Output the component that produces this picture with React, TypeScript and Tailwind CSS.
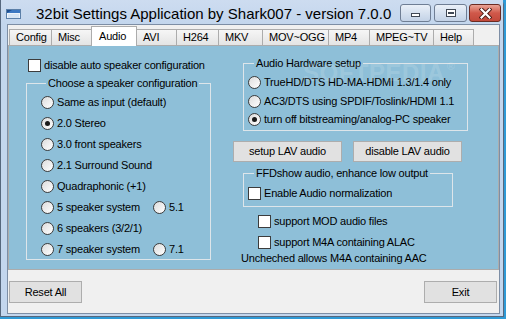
import React from "react";

const ui =
  "font-['Liberation_Sans',Arial,sans-serif] text-[11px] leading-[13px] tracking-[-0.2px] text-black";

type RadioProps = { label: string; checked?: boolean; className?: string };

const Radio = ({ label, checked, className = "" }: RadioProps) => (
  <div className={`flex items-center gap-[3px] h-[13px] ${className}`}>
    <span className="w-[13px] h-[13px] shrink-0 rounded-full border border-[#3c3c3c] bg-linear-to-br from-[#dcdcdc] to-white flex items-center justify-center">
      {checked && <span className="w-[5px] h-[5px] rounded-full bg-[#1a1a1a]" />}
    </span>
    <span className="whitespace-nowrap">{label}</span>
  </div>
);

const Check = ({ label, className = "" }: { label: string; className?: string }) => (
  <div className={`flex items-center gap-[3px] h-[13px] ${className}`}>
    <span className="w-[13px] h-[13px] shrink-0 border border-[#3c3c3c] bg-white" />
    <span className="whitespace-nowrap">{label}</span>
  </div>
);

const Group = ({
  title,
  className = "",
  legend = "ml-[5px]",
  children,
}: {
  title: string;
  className?: string;
  legend?: string;
  children: React.ReactNode;
}) => (
  <fieldset className={`border border-[#dde5ea] ${className}`}>
    <legend className={`px-[2px] leading-[13px] whitespace-nowrap ${legend}`}>{title}</legend>
    {children}
  </fieldset>
);

const Button = ({ label, className = "" }: { label: string; className?: string }) => (
  <div
    className={`flex items-center justify-center border border-[#adadad] bg-[#e1e1e1] whitespace-nowrap ${className}`}
  >
    {label}
  </div>
);

const tabs: { name: string; w: string }[] = [
  { name: "Config", w: "w-[43px]" },
  { name: "Misc", w: "w-[41px]" },
  { name: "Audio", w: "w-[46px]" },
  { name: "AVI", w: "w-[41px]" },
  { name: "H264", w: "w-[43px]" },
  { name: "MKV", w: "w-[45px]" },
  { name: "MOV~OGG", w: "w-[67px]" },
  { name: "MP4", w: "w-[42px]" },
  { name: "MPEG~TV", w: "w-[65px]" },
  { name: "Help", w: "w-[41px]" },
];

const WinIcon = () => (
  <svg width="15" height="10" viewBox="0 0 15 10">
    <rect x="0.5" y="0.5" width="14" height="9" fill="#eef4fb" stroke="#5b7fa8" />
    <rect x="1" y="1" width="13" height="3" fill="#3d78c2" />
    <path d="M1 4 L6 1 L1 1 Z" fill="#1f4f8f" />
    <rect x="2" y="5" width="11" height="4" fill="#d6e4f4" />
  </svg>
);

const CaptionButtons = () => (
  <div className="ml-auto mr-[2px] mt-[4px] flex items-start gap-[2px] self-start">
    <div className="w-[31px] h-[18px] rounded-[3px] border border-[#6f7e94] bg-linear-to-b from-[#eaf0f8] to-[#c3d2e6] flex items-end justify-center pb-[4px] mr-[1px]">
      <span className="w-[9px] h-[4px] border border-[#404854] bg-white" />
    </div>
    <div className="w-[33px] h-[18px] rounded-[3px] border border-[#6f7e94] bg-linear-to-b from-[#eaf0f8] to-[#c3d2e6] flex items-center justify-center">
      <span className="w-[10px] h-[8px] border border-[#404854] bg-white flex items-center justify-center">
        <span className="w-[6px] h-[2px] border border-[#404854]" />
      </span>
    </div>
    <div className="w-[32px] h-[18px] rounded-[3px] border border-[#6b2b22] bg-linear-to-b from-[#e9a396] via-[#d0584a] to-[#c2493b] flex items-center justify-center">
      <svg width="13" height="11" viewBox="0 0 13 11">
        <path d="M2.5 1.5 L10.5 9.5 M10.5 1.5 L2.5 9.5" stroke="#4a1a14" strokeWidth="4" strokeLinecap="square" />
        <path d="M2.5 1.5 L10.5 9.5 M10.5 1.5 L2.5 9.5" stroke="#ffffff" strokeWidth="2.2" strokeLinecap="square" />
      </svg>
    </div>
  </div>
);

export default function App() {
  return (
    <div className={`w-[506px] h-[319px] bg-[#2f9ad6] overflow-hidden ${ui}`}>
      <div className="w-[504px] h-[317px] bg-[#c3d6ed] border-l border-r border-b border-[#56677d] rounded-tr-[5px] flex flex-col">
        {/* title bar */}
        <div className="h-[24px] flex items-start bg-linear-to-b from-[#cddcf0] to-[#c3d6ed]">
          <div className="ml-[5px] mt-[9px]">
            <WinIcon />
          </div>
          <div className="ml-[15px] mt-[5px] text-[15px] leading-[18px] tracking-[0px] whitespace-nowrap">
            32bit Settings Application by Shark007 - version 7.0.0
          </div>
          <CaptionButtons />
        </div>

        {/* client area */}
        <div className="ml-[6px] w-[493px] h-[290px] border border-[#7d8ea5] bg-[#f0f0f0] flex flex-col">
          {/* tabs */}
          <div className="h-[20px] pl-[1px] flex items-end">
            {tabs.map((t, i) => {
              const sel = t.name === "Audio";
              return (
                <div
                  key={t.name}
                  className={`${t.w} ${i > 0 ? "-ml-px" : ""} border border-b-0 border-[#acacac] flex items-center whitespace-nowrap ${
                    sel
                      ? "h-[20px] bg-white pl-[7px] pb-[1px] relative z-10 -mb-px"
                      : "h-[16px] bg-linear-to-b from-[#f6f6f6] to-[#e4e4e4] pl-[6px]"
                  }`}
                >
                  {t.name}
                </div>
              );
            })}
          </div>

          {/* tab page */}
          <div className="relative w-[491px] h-[225px] border border-[#acacac] bg-[#8ebfd8] flex">
            {/* left column */}
            <div className="ml-[17px] w-[185px] flex flex-col">
              <Check label="disable auto speaker configuration" className="mt-[13px] ml-[2px]" />
              <Group title="Choose a speaker configuration" className="mt-[5px] w-[185px] pl-[14px] pb-[3px]">
                <div className="mt-[6px] flex flex-col gap-[8px]">
                  <Radio label="Same as input (default)" />
                  <Radio label="2.0 Stereo" checked />
                  <Radio label="3.0 front speakers" />
                  <Radio label="2.1 Surround Sound" />
                  <Radio label="Quadraphonic (+1)" />
                  <div className="flex">
                    <Radio label="5 speaker system" className="w-[112px]" />
                    <Radio label="5.1" />
                  </div>
                  <Radio label="6 speakers (3/2/1)" />
                  <div className="flex">
                    <Radio label="7 speaker system" className="w-[112px]" />
                    <Radio label="7.1" />
                  </div>
                </div>
              </Group>
            </div>

            {/* right column */}
            <div className="ml-[22px] flex flex-col">
              <Group
                title="Audio Hardware setup"
                legend="ml-[6px]"
                className="mt-[11px] ml-[10px] w-[225px] pl-[4px] pb-[4px]"
              >
                <div className="mt-[6px] flex flex-col gap-[5.5px]">
                  <Radio label="TrueHD/DTS HD-MA-HDMI 1.3/1.4 only" />
                  <Radio label="AC3/DTS using SPDIF/Toslink/HDMI 1.1" />
                  <Radio label="turn off bitstreaming/analog-PC speaker" checked />
                </div>
              </Group>

              <div className="mt-[10px] flex gap-[11px]">
                <Button label="setup LAV audio" className="w-[109px] h-[21px]" />
                <Button label="disable LAV audio" className="w-[109px] h-[21px]" />
              </div>

              <Group
                title="FFDshow audio, enhance low output"
                legend="ml-[6px]"
                className="mt-[5px] ml-[10px] w-[210px] pl-[4px] pb-[6px]"
              >
                <Check label="Enable Audio normalization" className="mt-[7px]" />
              </Group>

              <Check label="support MOD audio files" className="mt-[8px] ml-[25px]" />
              <Check label="support M4A containing ALAC" className="mt-[8px] ml-[25px]" />
              <div className="mt-[3px] ml-[8px] whitespace-nowrap">Uncheched allows M4A containing AAC</div>
            </div>

            {/* faint watermark over the page */}
            <div className="absolute left-[294px] top-[15px] flex items-start text-white/15 font-['Liberation_Sans',Arial,sans-serif] font-bold pointer-events-none select-none">
              <span className="text-[24px] leading-[24px] tracking-[0.5px]">SOFTPEDIA</span>
              <span className="text-[11px] leading-[11px] ml-[2px]">®</span>
            </div>
          </div>

          {/* bottom buttons */}
          <div className="mt-[11px] flex justify-between pl-[1px] pr-[2px]">
            <Button label="Reset All" className="w-[73px] h-[22px]" />
            <Button label="Exit" className="w-[73px] h-[22px]" />
          </div>
        </div>
      </div>
    </div>
  );
}
